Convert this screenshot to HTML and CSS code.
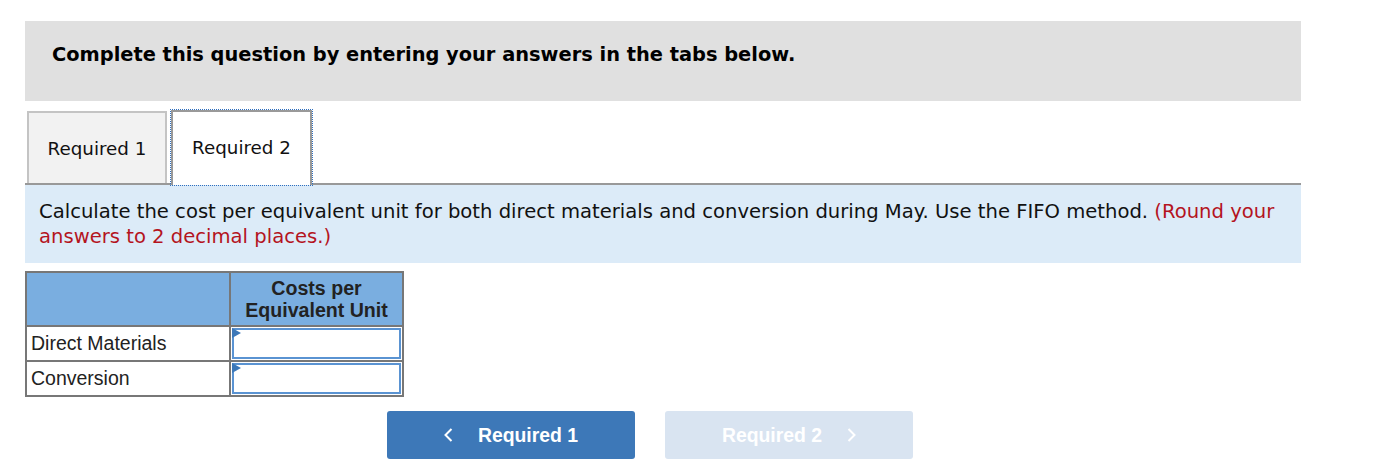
FILE: index.html
```html
<!DOCTYPE html>
<html>
<head>
<meta charset="utf-8">
<link rel="stylesheet" href="styles.css">
</head>
<body>
<div class="wrap">
  <div class="instr">Complete this question by entering your answers in the tabs below.</div>
  <div class="tabs">
    <div class="tab tab-inactive">Required 1</div>
    <div class="tab tab-active">Required 2</div>
  </div>
  <div class="info">Calculate the cost per equivalent unit for both direct materials and conversion during May. Use the FIFO method. <span class="red">(Round your</span> <span class="red">answers to 2 decimal places.)</span></div>
  <table class="grid">
    <tr class="head">
      <th class="c1"></th>
      <th class="c2">Costs per<br>Equivalent Unit</th>
    </tr>
    <tr>
      <td class="label">Direct Materials</td>
      <td class="cell"><div class="inp"><span class="tri"></span></div></td>
    </tr>
    <tr>
      <td class="label">Conversion</td>
      <td class="cell"><div class="inp"><span class="tri"></span></div></td>
    </tr>
  </table>
  <div class="nav">
    <div class="btn btn-prev">
      <svg class="chev" width="9" height="14" viewBox="0 0 9 14"><polyline points="7.5,1 1.5,7 7.5,13" fill="none" stroke="#fff" stroke-width="2"/></svg>
      <span>Required 1</span>
    </div>
    <div class="btn btn-next">
      <span>Required 2</span>
      <svg class="chev" width="9" height="14" viewBox="0 0 9 14"><polyline points="1.5,1 7.5,7 1.5,13" fill="none" stroke="#fff" stroke-width="2"/></svg>
    </div>
  </div>
</div>
</body>
</html>
```
FILE: styles.css
```css
html, body {
  margin: 0;
  padding: 0;
  background: #fff;
}
.wrap {
  width: 1276px;
  margin: 21px 0 0 25px;
  font-family: "DejaVu Sans", Verdana, sans-serif;
  color: #111;
}
.instr {
  height: 80px;
  box-sizing: border-box;
  background: #e0e0e0;
  padding: 22px 0 0 27px;
  font-weight: bold;
  font-size: 19.4px;
  line-height: 24px;
  color: #000;
}
.tabs {
  display: flex;
  align-items: flex-end;
  margin-top: 8px;
  height: 76px;
  box-sizing: border-box;
  border-bottom: 2px solid #999;
  padding-left: 2px;
}
.tab {
  box-sizing: border-box;
  display: flex;
  align-items: center;
  justify-content: center;
  font-size: 18.3px;
  color: #111;
}
.tab-inactive {
  width: 140px;
  height: 72px;
  background: #f2f2f2;
  border: 2px solid #c4c4c4;
  border-bottom: none;
}
.tab-active {
  width: 141px;
  height: 75px;
  margin-left: 4px;
  margin-bottom: -2px;
  background: #fff;
  border: 2px solid #999;
  border-bottom: none;
  outline: 1px dotted #2f6fbf;
  padding-bottom: 2px;
}
.info {
  background: #dcebf8;
  padding: 14px 14px 14px 14px;
  font-size: 19.6px;
  line-height: 25px;
  color: #111;
}
.red {
  color: #b4141e;
}
.grid {
  margin-top: 8px;
  border-collapse: collapse;
  border: 2px solid #777;
  font-family: "Liberation Sans", Arial, sans-serif;
  color: #222;
}
.grid th, .grid td {
  border: 2px solid #777;
  padding: 0;
}
.head th {
  background: #7aaee0;
  height: 52px;
  font-size: 19.6px;
  line-height: 22px;
  font-weight: bold;
  text-align: center;
}
.c1 {
  width: 202px;
}
.c2 {
  width: 171px;
}
.label {
  height: 33px;
  font-size: 19.5px;
  padding-left: 4px !important;
  text-align: left;
}
.cell {
  height: 33px;
  vertical-align: top;
}
.inp {
  position: relative;
  margin: 1px;
  height: 31px;
  box-sizing: border-box;
  border: 2px solid #5a93d2;
  background: #fff;
}
.tri {
  position: absolute;
  left: -2px;
  top: -2px;
  width: 0;
  height: 0;
  border-top: 5px solid transparent;
  border-bottom: 5px solid transparent;
  border-left: 9px solid #3d78b8;
}
.nav {
  display: flex;
  gap: 30px;
  margin-top: 14px;
  padding-left: 362px;
}
.btn {
  width: 248px;
  height: 48px;
  border-radius: 3px;
  display: flex;
  align-items: center;
  justify-content: center;
  gap: 25px;
  font-family: "Liberation Sans", Arial, sans-serif;
  font-weight: bold;
  font-size: 19.4px;
  color: #fff;
}
.btn-prev {
  background: #3d78b8;
}
.btn-next {
  background: #d9e4f1;
}
.chev {
  display: block;
}
```
